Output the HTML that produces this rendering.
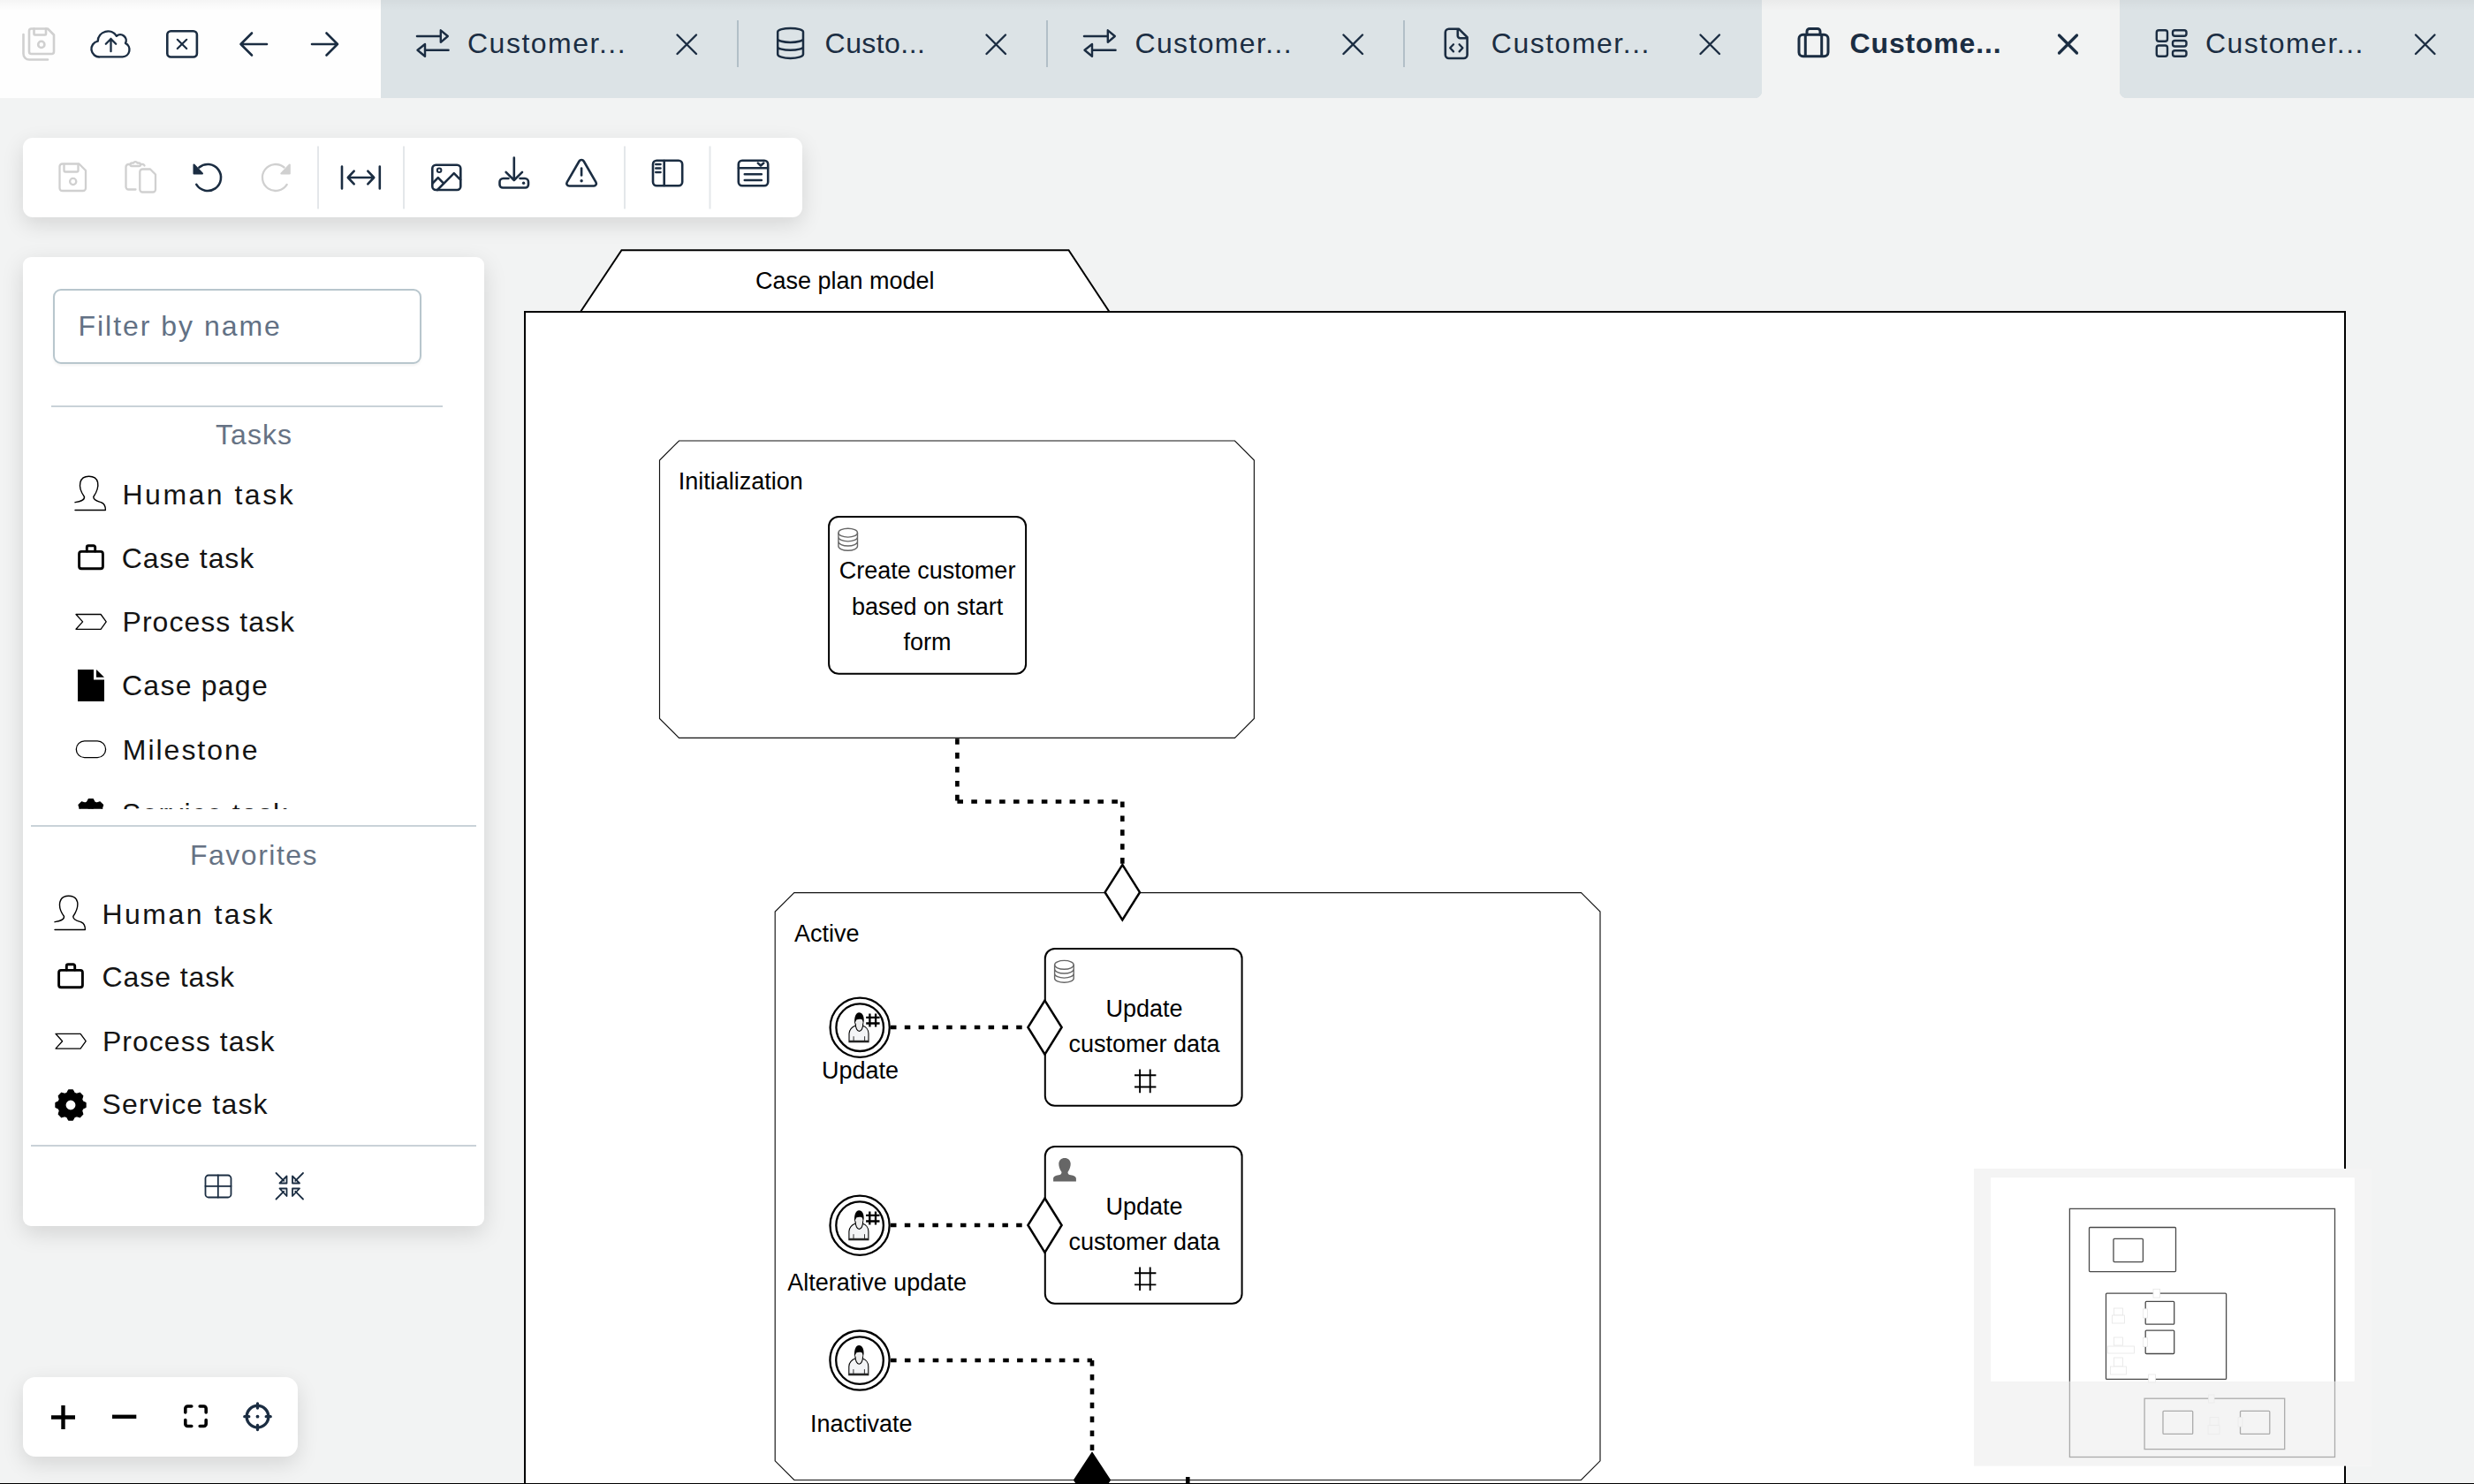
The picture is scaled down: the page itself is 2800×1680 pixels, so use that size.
<!DOCTYPE html>
<html>
<head>
<meta charset="utf-8">
<style>
html,body{margin:0;padding:0;}
body{width:2800px;height:1680px;overflow:hidden;position:relative;background:#f2f3f3;font-family:"Liberation Sans",sans-serif;}
.abs{position:absolute;}
#hdr{left:0;top:0;width:431px;height:111px;background:#fefefe;}
#tabs{left:431px;top:0;width:2369px;height:111px;background:#dce3e6;}
.tab{position:absolute;top:0;height:111px;}
.tabtxt{position:absolute;top:31px;font-size:32px;line-height:36px;color:#1b2d42;letter-spacing:1.2px;white-space:nowrap;}
.sep{position:absolute;top:23px;width:2px;height:53px;background:#b2bfc7;}
svg{position:absolute;overflow:visible;}
#toolbar{left:26px;top:156px;width:882px;height:90px;background:#fff;border-radius:11px;box-shadow:0 8px 24px rgba(0,0,0,0.12);}
#side{left:26px;top:291px;width:522px;height:1097px;background:#fff;border-radius:9px;box-shadow:0 8px 26px rgba(0,0,0,0.13);}
#zoom{left:26px;top:1559px;width:311px;height:90px;background:#fff;border-radius:14px;box-shadow:0 8px 24px rgba(0,0,0,0.12);}
.item{position:absolute;font-size:32px;line-height:36px;color:#141414;white-space:nowrap;}
.sect{position:absolute;font-size:32px;line-height:36px;color:#667284;white-space:nowrap;}
.lbl{position:absolute;font-size:27px;line-height:30px;color:#000;white-space:nowrap;}
</style>
</head>
<body>
<div id="hdr" class="abs"></div>
<div id="tabs" class="abs"></div>
<!-- active tab -->
<div class="abs" style="left:1994px;top:0;width:405px;height:111px;background:#f2f3f3;"></div>
<div class="abs" style="left:1986px;top:103px;width:8px;height:8px;background:radial-gradient(circle at 0 0, #dce3e6 8px, #f2f3f3 8.5px);"></div>
<div class="abs" style="left:2399px;top:103px;width:8px;height:8px;background:radial-gradient(circle at 100% 0, #dce3e6 8px, #f2f3f3 8.5px);"></div>

<!-- canvas diagram -->
<svg id="dia" style="left:0;top:0;" width="2800" height="1680" viewBox="0 0 2800 1680">
<defs>
  <clipPath id="cvclip"><rect x="0" y="111" width="2800" height="1568"/></clipPath>
</defs>
<g clip-path="url(#cvclip)" font-family="Liberation Sans" font-size="27" fill="#000">
  <!-- case plan model -->
  <rect x="594" y="353" width="2060" height="1500" fill="#fff" stroke="#000" stroke-width="2"/>
  <polygon points="657,353 703.5,283.3 1209.5,283.3 1255.5,353" fill="#fff" stroke="#000" stroke-width="2" stroke-linejoin="miter"/>
  <text x="956.3" y="326.7" text-anchor="middle">Case plan model</text>

  <!-- Initialization stage -->
  <polygon points="768.5,499 1397.5,499 1419.4,521 1419.4,813.5 1397.5,835.3 768.5,835.3 746.5,813.5 746.5,521" fill="#fff" stroke="#111" stroke-width="1.15"/>
  <text x="767.8" y="554.1">Initialization</text>
  <rect x="938.1" y="585" width="223" height="177.7" rx="11" ry="11" fill="#fff" stroke="#000" stroke-width="2"/>
  <text text-anchor="middle"><tspan x="1049.6" y="654.9">Create customer</tspan><tspan x="1049.6" y="695.8">based on start</tspan><tspan x="1049.6" y="735.8">form</tspan></text>

  <!-- connector init -> active -->
  <g stroke="#000" stroke-width="4.6" stroke-dasharray="6.6 9.3" fill="none"><path d="M1083.4 836.2 V907.5"/><path d="M1083.4 907.5 H1270.3"/><path d="M1270.3 907.5 V979"/></g>

  <!-- Active stage -->
  <polygon points="898.8,1010.6 1789.5,1010.6 1811,1032 1811,1653.8 1789.5,1675.5 898.8,1675.5 877.2,1653.8 877.2,1032" fill="#fff" stroke="#111" stroke-width="1.15"/>
  <text x="899" y="1065.9">Active</text>
  <!-- entry criterion on stage -->
  <polygon points="1270.3,979 1290,1010.2 1270.3,1041.3 1250.6,1010.2" fill="#fff" stroke="#000" stroke-width="2.5"/>

  <!-- task 2 -->
  <rect x="1182.8" y="1074.1" width="222.8" height="177.7" rx="11" ry="11" fill="#fff" stroke="#000" stroke-width="2"/>
  <text text-anchor="middle"><tspan x="1295" y="1150.7">Update</tspan><tspan x="1295" y="1191.4">customer data</tspan></text>
  <!-- task 3 -->
  <rect x="1182.8" y="1298" width="222.8" height="177.7" rx="11" ry="11" fill="#fff" stroke="#000" stroke-width="2"/>
  <text text-anchor="middle"><tspan x="1295" y="1374.6">Update</tspan><tspan x="1295" y="1415.3">customer data</tspan></text>

  <!-- connectors events -> tasks -->
  <line x1="1008" y1="1163" x2="1163.4" y2="1163" stroke="#000" stroke-width="4.6" stroke-dasharray="6.5 9.3"/>
  <line x1="1008" y1="1387" x2="1163.4" y2="1387" stroke="#000" stroke-width="4.6" stroke-dasharray="6.5 9.3"/>
  <g stroke="#000" stroke-width="4.6" stroke-dasharray="6.6 9.3" fill="none"><path d="M1008 1540 H1236"/><path d="M1236 1540 V1645"/></g>

  <!-- entry criteria on tasks -->
  <polygon points="1182.5,1132.6 1201.6,1163 1182.5,1193.7 1163.4,1163" fill="#fff" stroke="#000" stroke-width="2.5"/>
  <polygon points="1182.5,1356.5 1201.6,1387 1182.5,1417.8 1163.4,1387" fill="#fff" stroke="#000" stroke-width="2.5"/>
  <!-- exit criterion -->
  <polygon points="1236,1645 1256,1675.5 1236,1706 1216,1675.5" fill="#000" stroke="#000" stroke-width="2"/>
  <rect x="1342" y="1672" width="4.6" height="8" fill="#000"/>

  <!-- events -->
  <g id="ev1">
    <circle cx="973.2" cy="1163.2" r="33.6" fill="#fff" stroke="#000" stroke-width="2.3"/>
    <circle cx="973.2" cy="1163.2" r="26.8" fill="#fff" stroke="#000" stroke-width="2.3"/>
  </g>
  <circle cx="973.1" cy="1387.2" r="33.6" fill="#fff" stroke="#000" stroke-width="2.3"/>
  <circle cx="973.1" cy="1387.2" r="26.8" fill="#fff" stroke="#000" stroke-width="2.3"/>
  <circle cx="973" cy="1540.1" r="33.6" fill="#fff" stroke="#000" stroke-width="2.3"/>
  <circle cx="973" cy="1540.1" r="26.8" fill="#fff" stroke="#000" stroke-width="2.3"/>

  <!-- DB icons -->
  <g id="dbic" fill="none" stroke="#666" stroke-width="1.4">
    <ellipse cx="959.7" cy="603.2" rx="10.8" ry="4.9"/>
    <path d="M948.9 603.2 V618.3 A10.8 4.9 0 0 0 970.5 618.3 V603.2 M948.9 608 A10.8 4.9 0 0 0 970.5 608 M948.9 613.1 A10.8 4.9 0 0 0 970.5 613.1"/>
  </g>
  <use href="#dbic" transform="translate(244.7,489.1)"/>
  <!-- person icon task 3 -->
  <path d="M1192.1 1337.6 V1334 C1192.1 1331.5 1196 1330.6 1199.5 1330 C1201 1329.5 1201.8 1328 1201.4 1326.8 C1199 1323.5 1198.3 1320 1198.3 1317.5 C1198.3 1313.5 1201.2 1310.9 1205 1310.9 C1208.8 1310.9 1211.7 1313.5 1211.7 1317.5 C1211.7 1320 1211 1323.5 1208.6 1326.8 C1208.2 1328 1209 1329.5 1210.5 1330 C1214 1330.6 1217.9 1331.5 1217.9 1334 V1337.6 Z" fill="#666"/>
  <!-- # markers -->
  <g id="hash" stroke="#000" stroke-width="1.9" fill="none">
    <path d="M1290.1 1210.5 V1237.2 M1301.7 1210.5 V1237.2 M1284 1217.3 H1308.4 M1284 1230.5 H1308.4"/>
  </g>
  <use href="#hash" transform="translate(0,223.9)"/>
  <!-- event person icons -->
  <g id="evp">
    <path d="M961 1179.8 V1170 C961 1166 964.3 1162.4 968 1161.2 L976.5 1161.2 C980.2 1162.4 983 1166 983 1170 V1179.8 Z" fill="#f3f4f6" stroke="#000" stroke-width="1.1"/>
    <ellipse cx="972.5" cy="1159.5" rx="4.4" ry="6.5" fill="#ececec"/>
    <path d="M968.2 1158.5 C968.2 1163.8 970.2 1167.4 972.5 1167.4 C974.8 1167.4 976.8 1163.8 976.8 1158.5" fill="none" stroke="#000" stroke-width="1.1"/>
    <path d="M966.1 1179.5 V1173.2 M978.6 1179.5 V1173.2" stroke="#333" stroke-width="1"/>
    <rect x="961" y="1177.8" width="22" height="2" fill="#222"/>
    <path d="M967.2 1160 C966.5 1151.5 968.5 1146.2 972.3 1146.2 C976.3 1146.2 978.2 1151 977.7 1156 C977.4 1158 977 1159.5 976.6 1160.3 C976.8 1157.5 976.4 1155.3 975.6 1154.3 C973.6 1153.6 971 1153.7 969.3 1154.6 C968.4 1156.2 967.8 1158 967.2 1160 Z" fill="#000"/>
  </g>
  <g id="evhash" stroke="#000" stroke-width="2.3" fill="none">
    <path d="M984.4 1147.6 V1162.6 M991.1 1147.6 V1162.6 M980.2 1151.8 H995.6 M980.2 1158.5 H995.6"/>
  </g>
  <use href="#evp" transform="translate(-0.1,224)"/>
  <use href="#evhash" transform="translate(-0.1,224)"/>
  <use href="#evp" transform="translate(-0.2,376.9)"/>
  <text x="973.5" y="1220.8" text-anchor="middle">Update</text>
  <text x="992.6" y="1460.6" text-anchor="middle">Alterative update</text>
  <text x="974.8" y="1621" text-anchor="middle">Inactivate</text>
</g>
</svg>

<div class="abs" style="left:0;top:0;width:2800px;height:12px;background:linear-gradient(rgba(0,0,0,0.035),rgba(0,0,0,0));z-index:1;"></div>
<div id="toolbar" class="abs"></div>
<div id="side" class="abs"></div>
<div id="zoom" class="abs"></div>

<!-- tab texts -->
<div class="tabtxt" style="left:529px;letter-spacing:1.5px;">Customer...</div>
<div class="sep" style="left:834px;"></div>
<div class="tabtxt" style="left:933.6px;letter-spacing:0.43px;">Custo...</div>
<div class="sep" style="left:1184px;"></div>
<div class="tabtxt" style="left:1284.5px;letter-spacing:1.35px;">Customer...</div>
<div class="sep" style="left:1588px;"></div>
<div class="tabtxt" style="left:1687.8px;letter-spacing:1.5px;">Customer...</div>
<div class="tabtxt" style="left:2093.6px;font-weight:bold;letter-spacing:0.82px;">Custome...</div>
<div class="tabtxt" style="left:2495.9px;letter-spacing:1.5px;">Customer...</div>

<!-- sidebar content -->
<div class="abs" style="left:60px;top:327px;width:417px;height:85px;border:2px solid #b8c6cd;border-radius:9px;box-sizing:border-box;background:#fff;box-shadow:0 2px 3px rgba(0,0,0,0.05);"></div>
<div class="abs" style="left:88.5px;top:350.7px;font-size:32px;line-height:36px;color:#627185;letter-spacing:1.97px;white-space:nowrap;">Filter by name</div>
<div class="abs" style="left:58px;top:459px;width:443px;height:2.2px;background:#c9d2d8;"></div>
<div class="sect" style="left:244px;top:474.1px;letter-spacing:1.08px;">Tasks</div>
<div class="abs" style="left:26px;top:520px;width:522px;height:396px;overflow:hidden;">
  <div class="item" style="left:112.5px;top:22px;letter-spacing:2.49px;">Human task</div>
  <div class="item" style="left:111.7px;top:94.3px;letter-spacing:0.91px;">Case task</div>
  <div class="item" style="left:112.5px;top:165.7px;letter-spacing:1.04px;">Process task</div>
  <div class="item" style="left:112px;top:237.8px;letter-spacing:1.24px;">Case page</div>
  <div class="item" style="left:112.8px;top:310.7px;letter-spacing:1.98px;">Milestone</div>
  <div class="item" style="left:112px;top:382.5px;letter-spacing:1.16px;">Service task</div>
</div>
<div class="abs" style="left:35px;top:933.5px;width:504px;height:2.2px;background:#c9d2d8;"></div>
<div class="sect" style="left:215px;top:950px;letter-spacing:1.5px;">Favorites</div>
<div class="item" style="left:115.4px;top:1017.2px;letter-spacing:2.49px;">Human task</div>
<div class="item" style="left:115.5px;top:1088px;letter-spacing:0.91px;">Case task</div>
<div class="item" style="left:115.9px;top:1160.5px;letter-spacing:1.04px;">Process task</div>
<div class="item" style="left:115.5px;top:1232.3px;letter-spacing:1.16px;">Service task</div>
<div class="abs" style="left:35px;top:1295.5px;width:504px;height:2.2px;background:#c9d2d8;"></div>


<!-- minimap -->
<svg id="mini" style="left:2234px;top:1323px;z-index:15;" width="450" height="337" viewBox="2234 1323 450 337">
  <rect x="2234" y="1323" width="450" height="336.5" fill="#fff"/>
  <g fill="none" stroke="#4a4a4a" stroke-width="1.3">
    <rect x="2342.4" y="1368.4" width="300.1" height="281.1"/>
    <rect x="2364.5" y="1389.5" width="98" height="50.1" rx="1"/>
    <rect x="2392" y="1402.4" width="33.4" height="26.2" rx="1"/>
    <rect x="2383.5" y="1464.2" width="136.1" height="97.2" rx="1"/>
    <rect x="2428.2" y="1473.4" width="32.5" height="25.8" rx="1"/>
    <rect x="2428.2" y="1506.1" width="32.5" height="26.4" rx="1"/>
    <rect x="2427.1" y="1583.2" width="158.6" height="57.4"/>
    <rect x="2448" y="1597.3" width="33.7" height="26.1" rx="1"/>
    <rect x="2535.5" y="1597.3" width="33.3" height="26.1" rx="1"/>
  </g>
  <g fill="#fff" stroke="#e6e6e6" stroke-width="0.8">
    <rect x="2392.5" y="1481" width="10" height="8"/>
    <rect x="2390.5" y="1489" width="14" height="9"/>
    <rect x="2392.5" y="1514" width="10" height="9"/>
    <rect x="2385.5" y="1524" width="30" height="8"/>
    <rect x="2392.5" y="1537" width="10" height="10"/>
    <rect x="2388.5" y="1547" width="18" height="9"/>
    <rect x="2437" y="1459.3" width="7.6" height="9.7"/>
    <rect x="2425.4" y="1481.8" width="5.1" height="10.2"/>
    <rect x="2425.4" y="1514.6" width="5.1" height="10"/>
    <rect x="2431.7" y="1556" width="7.7" height="9"/>
    <rect x="2499.6" y="1579" width="6.4" height="9"/>
    <rect x="2501" y="1604.7" width="10" height="9"/>
    <rect x="2499" y="1613.7" width="13" height="10"/>
    <rect x="2533" y="1604.7" width="5" height="10.3"/>
  </g>
  <path d="M2234 1323 H2684 V1659.5 H2234 Z M2253 1333.3 V1563.8 H2664.8 V1333.3 Z" fill="rgba(237,237,237,0.6)" fill-rule="evenodd"/>
</svg>
<div class="abs" style="left:0;top:1679px;width:2800px;height:1px;background:#000;"></div>
<svg id="ov" style="left:0;top:0;z-index:20;pointer-events:none;" width="2800" height="1680" viewBox="0 0 2800 1680">
<g fill="none" stroke="#1b2d42" stroke-width="2.6" stroke-linecap="round" stroke-linejoin="round">
  <!-- header: save-all disabled -->
  <g stroke="#d0d0d0">
    <path d="M35.5 32.5 H54 L61 39.5 V58.5 A2.5 2.5 0 0 1 58.5 61 H35.5 A2.5 2.5 0 0 1 33 58.5 V35 A2.5 2.5 0 0 1 35.5 32.5 Z"/>
    <path d="M38.5 32.5 V38.5 A1 1 0 0 0 39.5 39.5 H51 A1 1 0 0 0 52 38.5 V32.5"/>
    <circle cx="46.8" cy="50.4" r="3.6"/>
    <path d="M26.5 39 V61 A6.5 6.5 0 0 0 33 67.5 H54"/>
  </g>
  <!-- cloud upload -->
  <path d="M113.2 64.4 A9 9 0 0 1 110.7 46.6 A11.5 11.5 0 0 1 131.9 40.8 A6.6 6.6 0 0 1 142 48.9 A8.2 8.2 0 0 1 138.8 64.4 Z" stroke-width="2.4"/>
  <path d="M125.5 58.2 V44 M119.8 49.8 L125.5 44 L131.2 49.8" stroke-width="2.3"/>
  <!-- x box -->
  <rect x="189.3" y="35.3" width="33.6" height="29.2" rx="4"/>
  <path d="M200.8 44.8 L211.2 55 M211.2 44.8 L200.8 55" stroke-width="2.2"/>
  <!-- arrows -->
  <path d="M272.5 50 H302 M285 37.5 L272.5 50 L285 62.5"/>
  <path d="M353 50 H382 M369.5 37.5 L382 50 L369.5 62.5"/>

  <!-- tab1 exchange -->
  <path d="M472 41 H498.5 M481.5 56.8 H507.5"/>
  <path d="M498.8 34.3 L506.8 41 L498.8 47.8 Z M481 50 L472.5 56.8 L481 63.8 Z" stroke-width="2.4"/>
  <path d="M766.5 39.5 L788 61 M788 39.5 L766.5 61" stroke-width="2.4"/>
  <!-- tab2 db -->
  <path d="M880.2 36 A14.4 4.1 0 0 1 909 36 V61.6 A14.4 4.3 0 0 1 880.2 61.6 Z M880.2 44 A14.4 3.9 0 0 0 909 44 M880.2 52.9 A14.4 3.9 0 0 0 909 52.9" stroke-width="2.5"/>
  <path d="M1116.5 39.5 L1138 61 M1138 39.5 L1116.5 61" stroke-width="2.4"/>
  <!-- tab3 exchange -->
  <path d="M1227 41 H1253.5 M1236.5 56.8 H1262.5"/>
  <path d="M1253.8 34.3 L1261.8 41 L1253.8 47.8 Z M1236 50 L1227.5 56.8 L1236 63.8 Z" stroke-width="2.4"/>
  <path d="M1520.5 39.5 L1542 61 M1542 39.5 L1520.5 61" stroke-width="2.4"/>
  <!-- tab4 file code -->
  <path d="M1639.8 32.8 H1651.2 L1660.6 42.2 V62 A4 4 0 0 1 1656.6 66 H1639.8 A4 4 0 0 1 1635.8 62 V36.8 A4 4 0 0 1 1639.8 32.8 Z M1649.8 33 V40.5 A2.7 2.7 0 0 0 1652.5 43.2 H1660.5"/>
  <path d="M1645 50.3 L1641.2 54.3 L1645 58.4 M1651.6 50.3 L1655.4 54.3 L1651.6 58.4" stroke-width="2.3"/>
  <path d="M1924.5 39.5 L1946 61 M1946 39.5 L1924.5 61" stroke-width="2.4"/>
  <!-- tab5 briefcase -->
  <rect x="2036" y="39.3" width="33" height="24.5" rx="4.5" stroke-width="3"/>
  <path d="M2045 39 V35.5 A3 3 0 0 1 2048 32.5 H2057 A3 3 0 0 1 2060 35.5 V39 M2043.3 40 V63 M2061.7 40 V63" stroke-width="3"/>
  <path d="M2330.5 40 L2350.5 60 M2350.5 40 L2330.5 60" stroke-width="3.3"/>
  <!-- tab6 grid -->
  <rect x="2440.8" y="34.3" width="12.2" height="12.5" rx="2.5" stroke-width="2.4"/>
  <rect x="2440.8" y="51.5" width="12.2" height="12.3" rx="2.5" stroke-width="2.4"/>
  <rect x="2459" y="34.3" width="15.5" height="6.5" rx="2.5" stroke-width="2.4"/>
  <rect x="2459" y="46" width="15.5" height="6.5" rx="2.5" stroke-width="2.4"/>
  <rect x="2459" y="57.3" width="15.5" height="6.5" rx="2.5" stroke-width="2.4"/>
  <path d="M2734 39.5 L2755.5 61 M2755.5 39.5 L2734 61" stroke-width="2.4"/>

  <!-- toolbar -->
  <g stroke="#d0d0d0" stroke-width="2.3">
    <path d="M70.5 185.5 H89.5 L97 193 V213 A3 3 0 0 1 94 216 H70.5 A3 3 0 0 1 67.5 213 V188.5 A3 3 0 0 1 70.5 185.5 Z"/>
    <path d="M72.5 186 V193 A1.5 1.5 0 0 0 74 194.5 H87 A1.5 1.5 0 0 0 88.5 193 V186"/>
    <circle cx="82.7" cy="205.5" r="3.6"/>
    <path d="M153.5 214.5 H145.5 A3 3 0 0 1 142.5 211.5 V189 A3 3 0 0 1 145.5 186 H147.5 M160.5 186 H162 A3 3 0 0 1 163.5 187.5"/>
    <path d="M147.5 186.5 A1.5 1.5 0 0 0 149 188 H157.5 A1.5 1.5 0 0 0 159 186.5 A2 2 0 0 0 157 184.5 H155.5 A2.5 2.5 0 0 0 151 184.5 H149.5 A2 2 0 0 0 147.5 186.5 Z"/>
    <path d="M161.3 191.5 H170 L176 197.5 V214.5 A3 3 0 0 1 173 217.5 H161.3 A3 3 0 0 1 158.3 214.5 V194.5 A3 3 0 0 1 161.3 191.5 Z"/>
    <path d="M321.6 189.5 A15 15 0 1 0 324.7 208.9"/>
    <path d="M327.8 186.5 V196.5 H318.3 Z" fill="#d0d0d0" stroke-width="2"/>
  </g>
  <path d="M225.4 189.5 A15 15 0 1 1 222.3 208.9"/>
  <path d="M219.5 186.5 V196.5 H229 Z" fill="#1b2d42" stroke-width="2"/>
  <!-- fit width -->
  <path d="M387 188.5 V213.5 M429.8 188.5 V213.5 M394 201 H423 M400.7 193.7 L393.8 201 L400.7 208.3 M416.3 193.7 L423.2 201 L416.3 208.3"/>
  <!-- image -->
  <rect x="489.3" y="186.8" width="32" height="28.2" rx="4"/>
  <circle cx="497.1" cy="192.8" r="2.3" stroke-width="2"/>
  <path d="M489.6 207.5 L495.8 201.2 L501.8 207.3 M495 215 L513.8 196.2 L521 203.4"/>
  <!-- download -->
  <path d="M581.8 178.5 V204 M572.6 194.8 L581.8 204 L591 194.8"/>
  <path d="M575.5 202 H569.5 A4 4 0 0 0 565.5 206 V209 A3.5 3.5 0 0 0 569 212.5 H594.5 A3.5 3.5 0 0 0 598 209 V206 A4 4 0 0 0 594 202 H588.5"/>
  <circle cx="592.6" cy="207.2" r="1.7" fill="#1b2d42" stroke="none"/>
  <!-- warning -->
  <path d="M655.5 182.5 A3 3 0 0 1 660.7 182.5 L674.5 206.3 A2.8 2.8 0 0 1 672 210.5 H644.2 A2.8 2.8 0 0 1 641.7 206.3 Z"/>
  <path d="M658.1 190.5 V198.5"/>
  <circle cx="658.1" cy="204.8" r="1.7" fill="#1b2d42" stroke="none"/>
  <!-- panel -->
  <rect x="739" y="181.8" width="33.2" height="28.4" rx="4.2"/>
  <path d="M751.7 182 V210 M742.3 186 H747.5 M742.3 190.5 H747.5 M742.3 195 H747.5"/>
  <!-- list -->
  <rect x="835.8" y="181.8" width="33.4" height="28.4" rx="4.2"/>
  <path d="M836 190.3 H869 M857.8 184.6 L861 187.5 L864.3 184.6 M842.8 197.2 H861.8 M842.8 204 H861.8"/>
  <!-- separators -->
  <g stroke="#e4e7ea" stroke-width="2" stroke-linecap="butt">
    <path d="M360 165.5 V236.5 M457 165.5 V236.5 M707 165.5 V236.5 M803.5 165.5 V236.5"/>
  </g>

  
<!-- sidebar icons -->
<g id="sideicons" fill="none" stroke="#000" stroke-linejoin="round">
  <g id="ic_human">
    <path d="M85 568.7 C90 567.8 95.8 566.8 95.5 562.5 C91.5 557 89.8 550.5 90.9 546 C92 541.5 96 539.2 100.6 539.2 C105.2 539.2 109.5 541.5 110.6 546 C111.5 550.5 109.5 557 105.8 562.5 C105.6 566.5 111 567.6 115 569 C118.8 570.4 119.4 573 119.4 577.5 H85" stroke-width="1.4"/>
  </g>
  <g id="ic_case">
    <rect x="89.6" y="624.4" width="26.8" height="19.4" rx="2.5" stroke-width="2.9"/>
    <path d="M98.3 624 V619.6 A1.8 1.8 0 0 1 100.1 617.8 H105.9 A1.8 1.8 0 0 1 107.7 619.6 V624" stroke-width="2.9"/>
  </g>
  <g id="ic_proc">
    <polygon points="86,695.5 114.1,695.5 120.2,703.9 114.1,712.3 86,712.3 93.6,703.9" stroke-width="1.3"/>
  </g>
  <path d="M88 758 H106 V769.5 H118 V794 H88 Z M109 758 L118 766.7 H109 Z" fill="#000" stroke="none"/>
  <rect x="86.3" y="838.9" width="33.3" height="18.7" rx="9.35" stroke-width="1.3"/>
  <clipPath id="gclip"><rect x="60" y="880" width="100" height="35.8"/></clipPath>
  <path d="M98.53 908.06 L100.41 904.57 L105.19 904.57 L107.07 908.06 L109.36 909.00 L113.15 907.86 L116.54 911.25 L115.40 915.04 L116.34 917.33 L119.83 919.21 L119.83 923.99 L116.34 925.87 L115.40 928.16 L116.54 931.95 L113.15 935.34 L109.36 934.20 L107.07 935.14 L105.19 938.63 L100.41 938.63 L98.53 935.14 L96.24 934.20 L92.45 935.34 L89.06 931.95 L90.20 928.16 L89.26 925.87 L85.77 923.99 L85.77 919.21 L89.26 917.33 L90.20 915.04 L89.06 911.25 L92.45 907.86 L96.24 909.00 Z M108.90 921.60 A6.1 6.1 0 1 0 96.70 921.60 A6.1 6.1 0 1 0 108.90 921.60 Z" fill="#000" stroke="#000" stroke-width="1.3" stroke-linejoin="round" fill-rule="evenodd" clip-path="url(#gclip)"/>
  <use href="#ic_human" transform="translate(-23,475)"/>
  <use href="#ic_case" transform="translate(-23,474)"/>
  <use href="#ic_proc" transform="translate(-23,474.8)"/>
  <path d="M75.73 1237.46 L77.61 1233.97 L82.39 1233.97 L84.27 1237.46 L86.56 1238.40 L90.35 1237.26 L93.74 1240.65 L92.60 1244.44 L93.54 1246.73 L97.03 1248.61 L97.03 1253.39 L93.54 1255.27 L92.60 1257.56 L93.74 1261.35 L90.35 1264.74 L86.56 1263.60 L84.27 1264.54 L82.39 1268.03 L77.61 1268.03 L75.73 1264.54 L73.44 1263.60 L69.65 1264.74 L66.26 1261.35 L67.40 1257.56 L66.46 1255.27 L62.97 1253.39 L62.97 1248.61 L66.46 1246.73 L67.40 1244.44 L66.26 1240.65 L69.65 1237.26 L73.44 1238.40 Z M86.10 1251.00 A6.1 6.1 0 1 0 73.90 1251.00 A6.1 6.1 0 1 0 86.10 1251.00 Z" fill="#000" stroke="#000" stroke-width="1.3" stroke-linejoin="round" fill-rule="evenodd"/>
</g>

  <!-- sidebar bottom icons -->
  <rect x="232.5" y="1330.5" width="29" height="25" rx="3.5" stroke-width="1.8"/>
  <path d="M246.8 1330.5 V1355.5 M232.5 1342.8 H261.5" stroke-width="1.8"/>
  <g stroke-width="1.8">
    <path d="M312.5 1328 L321.3 1336.8 M343 1328 L334.2 1336.8 M312.5 1357.5 L321.3 1348.7 M343 1357.5 L334.2 1348.7"/>
    <path d="M324.5 1331.5 V1339.5 H316.5 Z M331 1331.5 V1339.5 H339 Z M324.5 1354 V1345.5 H316.5 Z M331 1354 V1345.5 H339 Z"/>
  </g>

  <!-- zoom controls -->
  <path d="M71.5 1591 V1618 M58 1604.5 H85" stroke="#000" stroke-width="4.4" stroke-linecap="butt"/>
  <path d="M127 1603.8 H154.3" stroke="#000" stroke-width="4.4" stroke-linecap="butt"/>
  <path d="M209.8 1599 V1594.5 A2.5 2.5 0 0 1 212.3 1592 H216.8 M226.2 1592 H230.7 A2.5 2.5 0 0 1 233.2 1594.5 V1599 M233.2 1607.5 V1612 A2.5 2.5 0 0 1 230.7 1614.5 H226.2 M216.8 1614.5 H212.3 A2.5 2.5 0 0 1 209.8 1612 V1607.5" stroke="#000" stroke-width="3.6"/>
  <circle cx="291.5" cy="1603.7" r="12.3" stroke-width="3.3"/>
  <path d="M291.5 1589 V1594 M291.5 1613.5 V1618.5 M276.8 1603.7 H281.8 M301.2 1603.7 H306.2" stroke-width="3.3"/>
  <circle cx="291.5" cy="1603.7" r="1.9" fill="#1b2d42" stroke="none"/>
</g>
</svg>

</body>
</html>
